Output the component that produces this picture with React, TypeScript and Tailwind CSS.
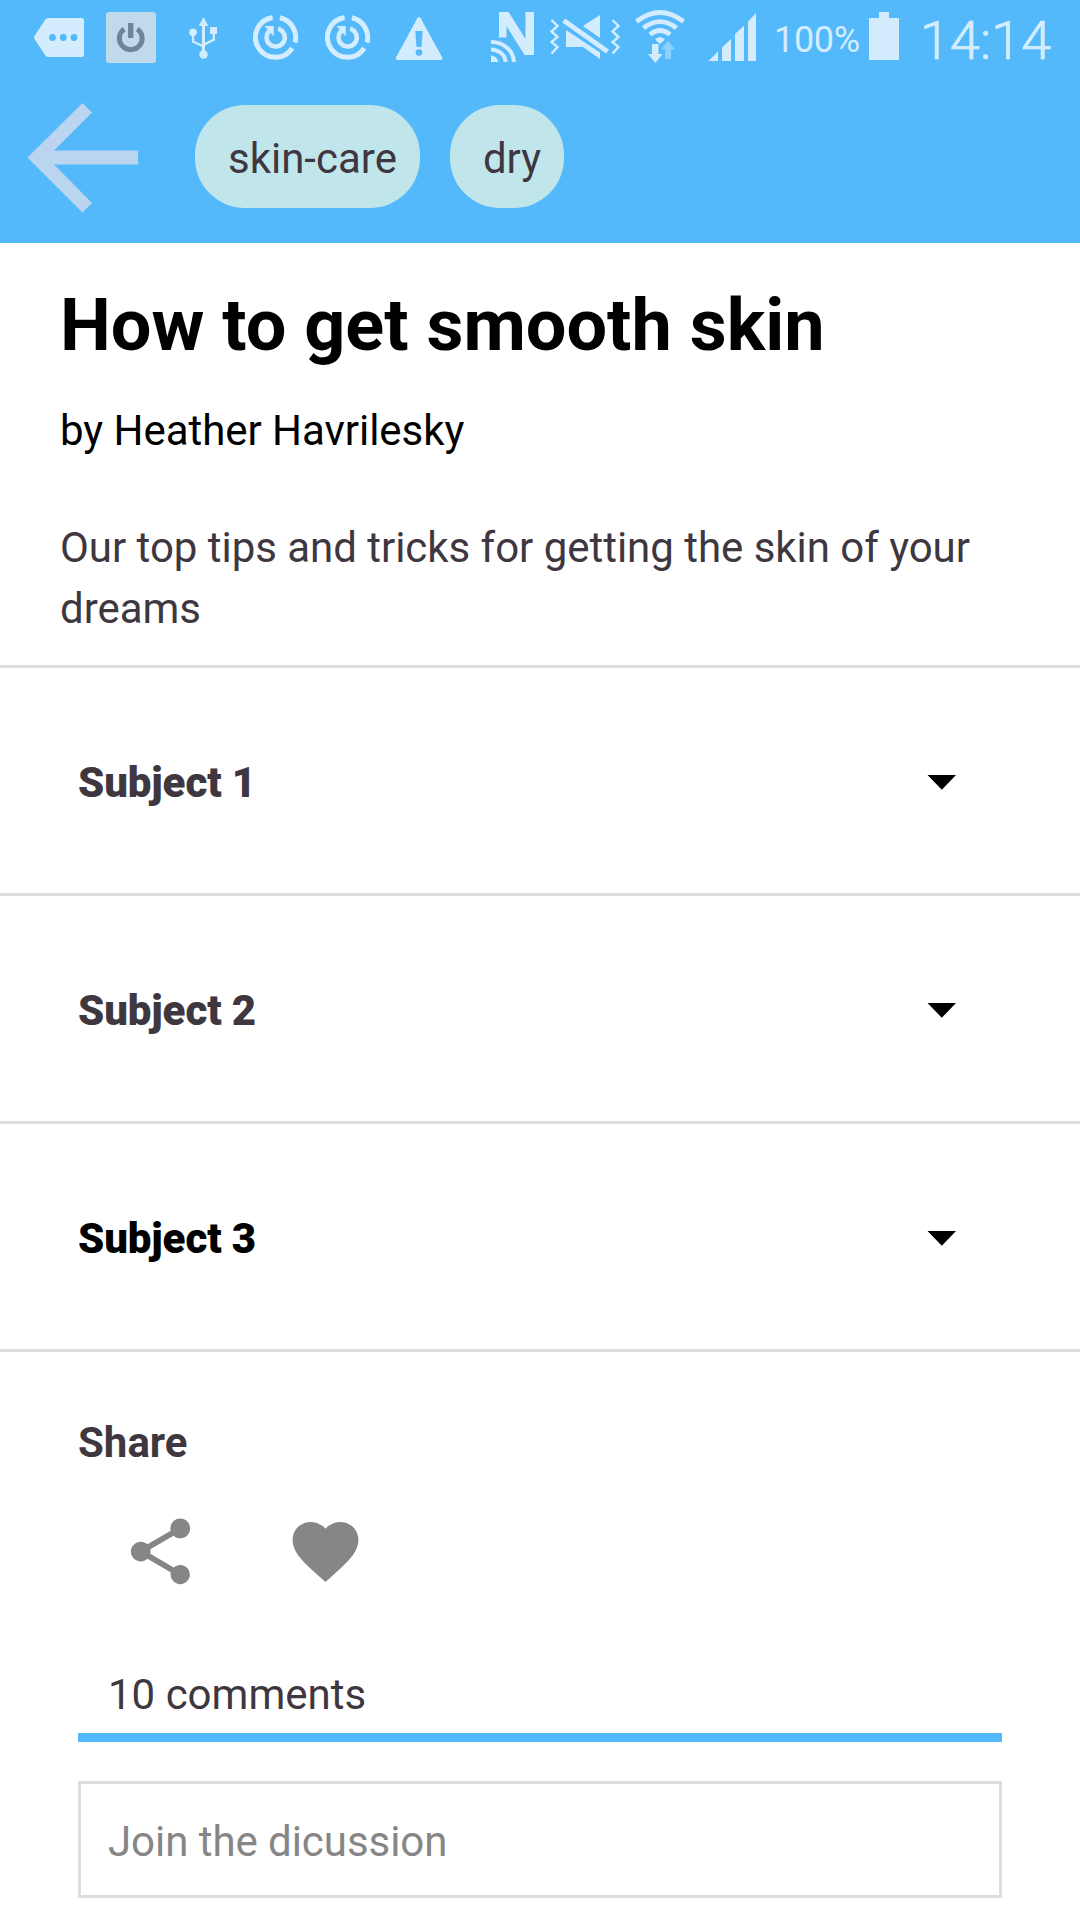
import type { ReactNode } from "react";

/** Status bar glyph: drawn in a 75px tall strip, `x` is where its strip begins. */
function Glyph({ x, w, className = "", children }: { x: number; w: number; className?: string; children: ReactNode }) {
  return (
    <svg width={w} height={75} viewBox={`${x} 0 ${w} 75`} className={`shrink-0 ${className}`} fill="#d4edfe">
      {children}
    </svg>
  );
}

function SyncGlyph({ className }: { className: string }) {
  return (
    <Glyph x={0} w={46} className={className}>
      <g fill="none" stroke="#d4edfe">
        <path d="M19.600 17.500A20 20 0 1 0 39.300 48.100" strokeWidth="5" />
        <path d="M26.900 17.800A20 20 0 0 1 42 42.500" strokeWidth="5" />
        <path d="M17.500 30A9.100 9.100 0 1 0 25 28.700" strokeWidth="4.500" />
      </g>
      <path d="M11.700 26h9v10.500l-3-3.500z" />
    </Glyph>
  );
}

function StatusBar() {
  return (
    <div className="flex h-[75px] items-start text-[#d4edfe]">
      <Glyph x={34} w={50} className="ml-[34px]">
        <path d="M48 18H81.500Q84 18 84 20.500V54.500Q84 57 81.500 57H48Q46 57 45 55L34.500 39Q33.800 37.500 34.500 36L45 20Q46 18 48 18Z" />
        <g fill="#53b9fa">
          <circle cx="52.500" cy="37.500" r="3.400" />
          <circle cx="63.300" cy="37.500" r="3.400" />
          <circle cx="74" cy="37.500" r="3.400" />
        </g>
      </Glyph>
      <Glyph x={106} w={50} className="ml-[22px]">
        <rect x="106" y="12" width="50" height="51" rx="3" fill="#c1daeb" />
        <path d="M124.200 29A11.400 11.400 0 1 0 137.300 29" fill="none" stroke="#6c8699" strokeWidth="5" />
        <rect x="128" y="23" width="5.400" height="15" fill="#6c8699" />
      </Glyph>
      <Glyph x={189} w={30} className="ml-[33px]">
        <path d="M203.500 17l4.800 9h-9.600z" />
        <circle cx="193" cy="32.300" r="3.800" />
        <circle cx="203.500" cy="54.500" r="4.200" />
        <rect x="210" y="27" width="7" height="7" />
        <g fill="none" stroke="#d4edfe">
          <path d="M203.500 24V52" strokeWidth="3" />
          <path d="M193 34V41.500L203.500 46.500M213.800 32V39.500L203.500 45" strokeWidth="2.300" />
        </g>
      </Glyph>
      <SyncGlyph className="ml-[34px]" />
      <SyncGlyph className="ml-[26px]" />
      <Glyph x={395} w={48} className="ml-[24px]">
        <path d="M417.300 18.200Q419 15.800 420.700 18.200L442.200 57.500Q443 60 440.500 60H397.500Q395 60 396 57.500Z" />
        <path d="M415.300 31h7.400l-1.200 16h-5z" fill="#53b9fa" />
        <circle cx="419" cy="52.500" r="3.300" fill="#53b9fa" />
      </Glyph>
      <Glyph x={491} w={43} className="ml-[48px]">
        <path d="M499 12h9.500L525.500 39V12H534V55h-9.500L506.500 26V37.500H499Z" />
        <g fill="none" stroke="#d4edfe" strokeWidth="4">
          <path d="M491 42A22.500 20 0 0 1 513.800 62" />
          <path d="M491 49.500A15 12.500 0 0 1 505.500 62" />
        </g>
        <path d="M491 55.500A7 6.500 0 0 1 498 62H491Z" />
      </Glyph>
      <Glyph x={550} w={71} className="ml-[16px]">
        <g fill="none" stroke="#d4edfe" strokeWidth="2.400">
          <path d="M551.500 20L557.500 26L551.500 31.500L557.500 37L551.500 42L557.500 47L551.500 53.500" />
          <path d="M612.500 20L618.500 26L612.500 31.500L618.500 37L612.500 42L618.500 47L612.500 53.500" />
        </g>
        <path d="M600 15V38L583 26ZM566 30L600 52.500V59L583 47H566Z" />
        <path d="M563.700 20.500L607.500 51.500" stroke="#d4edfe" strokeWidth="4.800" />
      </Glyph>
      <Glyph x={635} w={50} className="ml-[14px]">
        <g fill="none" stroke="#d4edfe" strokeWidth="4.800">
          <path d="M636.500 21.500Q660 3.500 683.500 21.500" />
          <path d="M643.500 28Q660 15.300 676.500 28" />
          <path d="M650 34.500Q660 26.500 670 34.500" />
        </g>
        <path d="M655 39.500Q660 34.500 665 39.500L660 44Z" />
        <path d="M652 44h6.500v10h4L655.300 63L648 54h4z" />
        <path d="M665 59h6.200V49.500h4L667.800 40.500L661 49.500h4z" fill="#8ed1fd" />
      </Glyph>
      <Glyph x={708} w={48} className="ml-[23px]">
        <path d="M718 51.500V61H708.500ZM722 47.500L731 39V61H722ZM735 34L744 25.500V61H735ZM748 21.500L756 13V61H748Z" />
      </Glyph>
      <span className="mt-[19px] ml-[18px] w-[95px] text-[36px] leading-[42px] tracking-[-0.3px]">100%</span>
      <Glyph x={869} w={30}>
        <path d="M879 12h10v6h10v42H869V18h10z" />
      </Glyph>
      <span className="mt-[9px] ml-[21px] text-[54px] leading-[64px] font-light [-webkit-text-stroke:0.7px_#d4edfe]">
        14:14
      </span>
    </div>
  );
}

function Chip({ label }: { label: string }) {
  return (
    <span className="flex h-[103px] items-center rounded-[50px] bg-[#c0e6ec] pt-[3px] pr-[23px] pl-[33px] text-[42px] text-[#3f3740]">
      {label}
    </span>
  );
}

function Subject({ title, active = false }: { title: string; active?: boolean }) {
  return (
    <div
      className={`flex h-[228px] items-center justify-between border-b-3 border-[#dedede] pr-[124px] pl-[78px] text-[42px] font-black tracking-[-0.1px] ${
        active ? "text-black" : "text-[#3f3740]"
      }`}
    >
      <span className="pt-[4px]">{title}</span>
      <svg width="29" height="15" viewBox="0 0 29 15" className="mt-[4px]">
        <path d="M.500 0H29L14.800 14.800Z" fill="#000" />
      </svg>
    </div>
  );
}

export default function App() {
  return (
    <div className="h-[1920px] w-[1080px] overflow-hidden bg-white font-['Roboto',sans-serif]">
      <header className="h-[243px] bg-[#53b9fa]">
        <StatusBar />
        <div className="flex items-start pt-[28px] pl-[27px]">
          <svg width="111" height="110" viewBox="0 0 111 110" className="shrink-0">
            <path d="M55.500 0L65 9.500L27 47.500H111V61.500H27L65 100L55.500 109.500L.500 54.500Z" fill="#bbd4ef" />
          </svg>
          <div className="mt-[2px] ml-[57px] flex gap-[30px]">
            <Chip label="skin-care" />
            <Chip label="dry" />
          </div>
        </div>
      </header>

      <section className="h-[425px] border-b-3 border-[#dedede] px-[60px] pt-[41px]">
        <h1 className="text-[72px] leading-[84px] font-bold text-black">How to get smooth skin</h1>
        <p className="mt-[38px] text-[42px] leading-[50px] tracking-[-0.04px] text-black">by Heather Havrilesky</p>
        <p className="mt-[61px] text-[42px] leading-[61px] tracking-[-0.03px] text-[#3f3740]">
          Our top tips and tricks for getting the skin of your dreams
        </p>
      </section>

      <Subject title="Subject 1" />
      <Subject title="Subject 2" />
      <Subject title="Subject 3" active />

      <section className="px-[78px] pt-[66px]">
        <h2 className="text-[42px] leading-[50px] font-bold text-[#3f3740]">Share</h2>
        <div className="flex pt-[44px] pl-[43px]">
          <svg width="79" height="79" viewBox="0 0 24 24" fill="#868686">
            <path d="M18 16.080c-.760 0-1.440.300-1.960.770L8.910 12.700c.050-.230.090-.460.090-.700s-.040-.470-.090-.700l7.050-4.110c.540.500 1.250.810 2.040.810 1.660 0 3-1.340 3-3s-1.340-3-3-3-3 1.340-3 3c0 .240.040.470.090.700L8.040 9.810C7.500 9.310 6.790 9 6 9c-1.660 0-3 1.340-3 3s1.340 3 3 3c.790 0 1.500-.310 2.040-.810l7.120 4.160c-.050.210-.080.430-.080.650 0 1.610 1.310 2.920 2.920 2.920 1.610 0 2.920-1.310 2.920-2.920s-1.310-2.920-2.920-2.920z" />
          </svg>
          <svg width="79" height="79" viewBox="0 0 24 24" fill="#868686" className="ml-[86px]">
            <path d="M12 21.300L10.550 20C5.400 15.360 2 12.280 2 8.500 2 5.420 4.420 3 7.500 3c1.740 0 3.410.810 4.500 2.090C13.090 3.810 14.760 3 16.500 3 19.580 3 22 5.420 22 8.500c0 3.780-3.400 6.860-8.550 11.500z" />
          </svg>
        </div>
        <p className="mt-[79px] border-b-9 border-[#53b9fa] pb-[13px] pl-[30px] text-[42px] leading-[50px] text-[#3f3740]">
          10 comments
        </p>
        <div className="mt-[39px] flex h-[117px] items-center border-3 border-[#dedede] pt-[3px] pl-[27px] text-[42px] tracking-[-0.05px] text-[#868686]">
          Join the dicussion
        </div>
      </section>
    </div>
  );
}
